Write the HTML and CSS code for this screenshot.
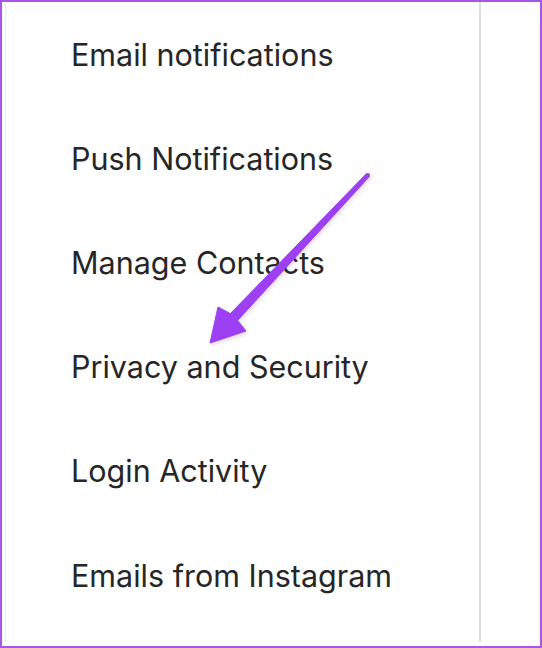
FILE: index.html
```html
<!DOCTYPE html>
<html>
<head>
<meta charset="utf-8">
<link rel="stylesheet" href="styles.css">
</head>
<body>
<div class="frame">
  <div class="panel">
    <ul class="menu">
      <li class="item">Email notifications</li>
      <li class="item">Push Notifications</li>
      <li class="item">Manage Contacts</li>
      <li class="item">Privacy and Security</li>
      <li class="item">Login Activity</li>
      <li class="item">Emails from Instagram</li>
    </ul>
  </div>
  <div class="rest"></div>
  <svg class="arrow" width="542" height="648" viewBox="0 0 542 648">
    <polygon fill="#9d3ff3" stroke="#9d3ff3" stroke-width="1" stroke-linejoin="round"
      points="366.5,173.6 230.4,313.6 218,307 210,343 246,331 237.6,320.4 369.5,176.4"/>
    <circle cx="368" cy="175" r="2" fill="#9d3ff3"/>
  </svg>
</div>
</body>
</html>
```
FILE: styles.css
```css
* { box-sizing: border-box; }
html, body { margin: 0; padding: 0; background: #fff; }
.frame {
  position: relative;
  width: 542px;
  height: 648px;
  border: 2px solid #a855e8;
  display: flex;
  background: #fff;
}
.panel {
  width: 476px;
  height: 640px;
  border-right: 2px solid #dcdcdc;
  border-left: 1px solid #ececec;
  margin-left: 3px;
}
.rest { flex: 1; }
.menu {
  list-style: none;
  margin: 0;
  padding: 0;
}
.item {
  height: 104.2px;
  display: flex;
  align-items: center;
  padding-left: 65px;
  font-family: Inter, "Liberation Sans", sans-serif;
  font-size: 30.5px;
  color: #262626;
  letter-spacing: 0;
}
.arrow {
  position: absolute;
  left: -2px;
  top: -2px;
  pointer-events: none;
  filter: drop-shadow(1px 2px 2px rgba(80, 40, 120, 0.18));
}
```
